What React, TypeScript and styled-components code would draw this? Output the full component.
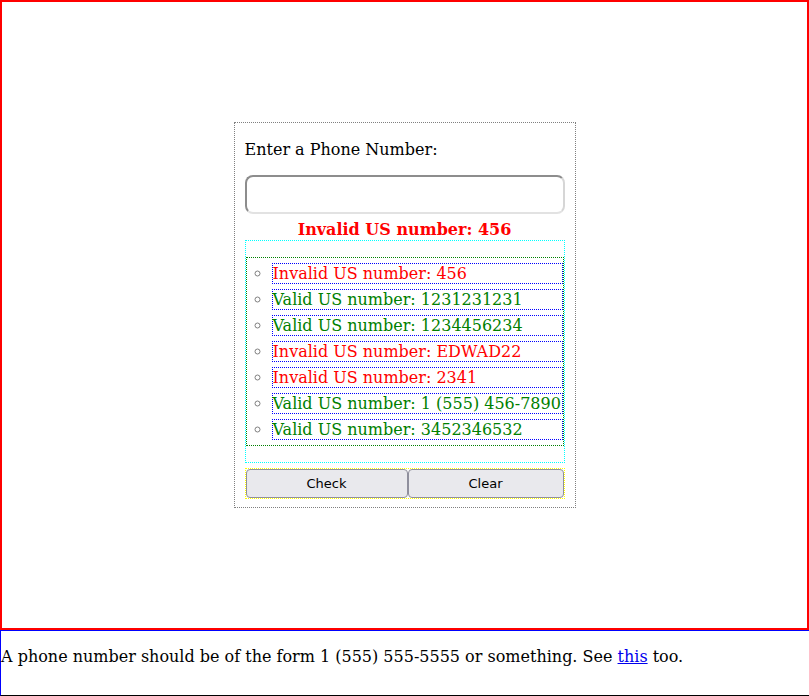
import styled, { createGlobalStyle } from 'styled-components';

const GlobalStyle = createGlobalStyle`
  html, body {
    margin: 0;
    padding: 0;
  }

  body {
    font-family: 'DejaVu Serif', serif;
    font-size: 16px;
    color: #000;
    background: #fff;
  }
`;

type CheckResult = {
  value: string;
  valid: boolean;
};

const results: CheckResult[] = [
  { value: '456', valid: false },
  { value: '1231231231', valid: true },
  { value: '1234456234', valid: true },
  { value: 'EDWAD22', valid: false },
  { value: '2341', valid: false },
  { value: '1 (555) 456-7890', valid: true },
  { value: '3452346532', valid: true },
];

const Stage = styled.div`
  box-sizing: border-box;
  height: 630px;
  border: 2px solid red;
  display: flex;
  align-items: center;
  justify-content: center;
`;

const Card = styled.div`
  width: 320px;
  padding: 8px 10px 8px;
  border: 1px dotted gray;
  display: flex;
  flex-direction: column;
`;

const Label = styled.label`
  display: block;
  margin: 9px 0 16px;
  line-height: 19px;
`;

const PhoneInput = styled.input`
  box-sizing: border-box;
  width: 100%;
  height: 39px;
  margin: 0;
  border: 2px solid;
  border-color: #8d8d8d #d6d6d6 #e2e2e2 #8d8d8d;
  border-radius: 8px;
  background: #fff;
  font-size: 16px;
`;

const Result = styled.div<{ $valid: boolean }>`
  margin-top: 6px;
  line-height: 19px;
  text-align: center;
  font-weight: bold;
  color: ${p => (p.$valid ? 'green' : 'red')};
`;

const ResultsBox = styled.div`
  margin-top: 1px;
  border: 1px dotted cyan;
`;

const ResultList = styled.ul`
  margin: 16px 0;
  padding: 0 0 0 25px;
  border: 1px dotted green;
  list-style: circle;
  color: gray;
`;

const ResultItem = styled.li`
  margin: 5px 0;
  border: 1px dotted blue;
  line-height: 19px;
  white-space: nowrap;
`;

const ResultText = styled.span<{ $valid: boolean }>`
  color: ${p => (p.$valid ? 'green' : 'red')};
`;

const ButtonRow = styled.div`
  margin-top: 5px;
  display: flex;
  border: 1px dotted yellow;
`;

const Button = styled.button`
  flex: 1 1 auto;
  height: 29px;
  margin: 0;
  padding: 1px 6px;
  font-family: 'DejaVu Sans', sans-serif;
  font-size: 13px;
  color: #000;
  background: #e9e9ed;
  border: 1px solid #8f8f9d;
  border-radius: 4px;
`;

const Footer = styled.div`
  box-sizing: border-box;
  height: 66px;
  border-top: 1px solid blue;
  border-left: 1px solid blue;
  border-bottom: 1px solid black;
`;

const Note = styled.p`
  margin: 16px 0 0;
  line-height: 19px;

  a {
    color: #0000ee;
  }
`;

export default function App() {
  const current = results[0];

  return (
    <>
      <GlobalStyle />
      <Stage>
        <Card>
          <Label htmlFor="phone">Enter a Phone Number:</Label>
          <PhoneInput id="phone" type="text" />
          <Result $valid={current.valid}>
            {current.valid ? 'Valid' : 'Invalid'} US number: {current.value}
          </Result>
          <ResultsBox>
            <ResultList>
              {results.map((item, i) => (
                <ResultItem key={i}>
                  <ResultText $valid={item.valid}>
                    {item.valid ? 'Valid' : 'Invalid'} US number: {item.value}
                  </ResultText>
                </ResultItem>
              ))}
            </ResultList>
          </ResultsBox>
          <ButtonRow>
            <Button>Check</Button>
            <Button>Clear</Button>
          </ButtonRow>
        </Card>
      </Stage>
      <Footer>
        <Note>
          A phone number should be of the form 1 (555) 555-5555 or something. See <a href="#">this</a> too.
        </Note>
      </Footer>
    </>
  );
}
